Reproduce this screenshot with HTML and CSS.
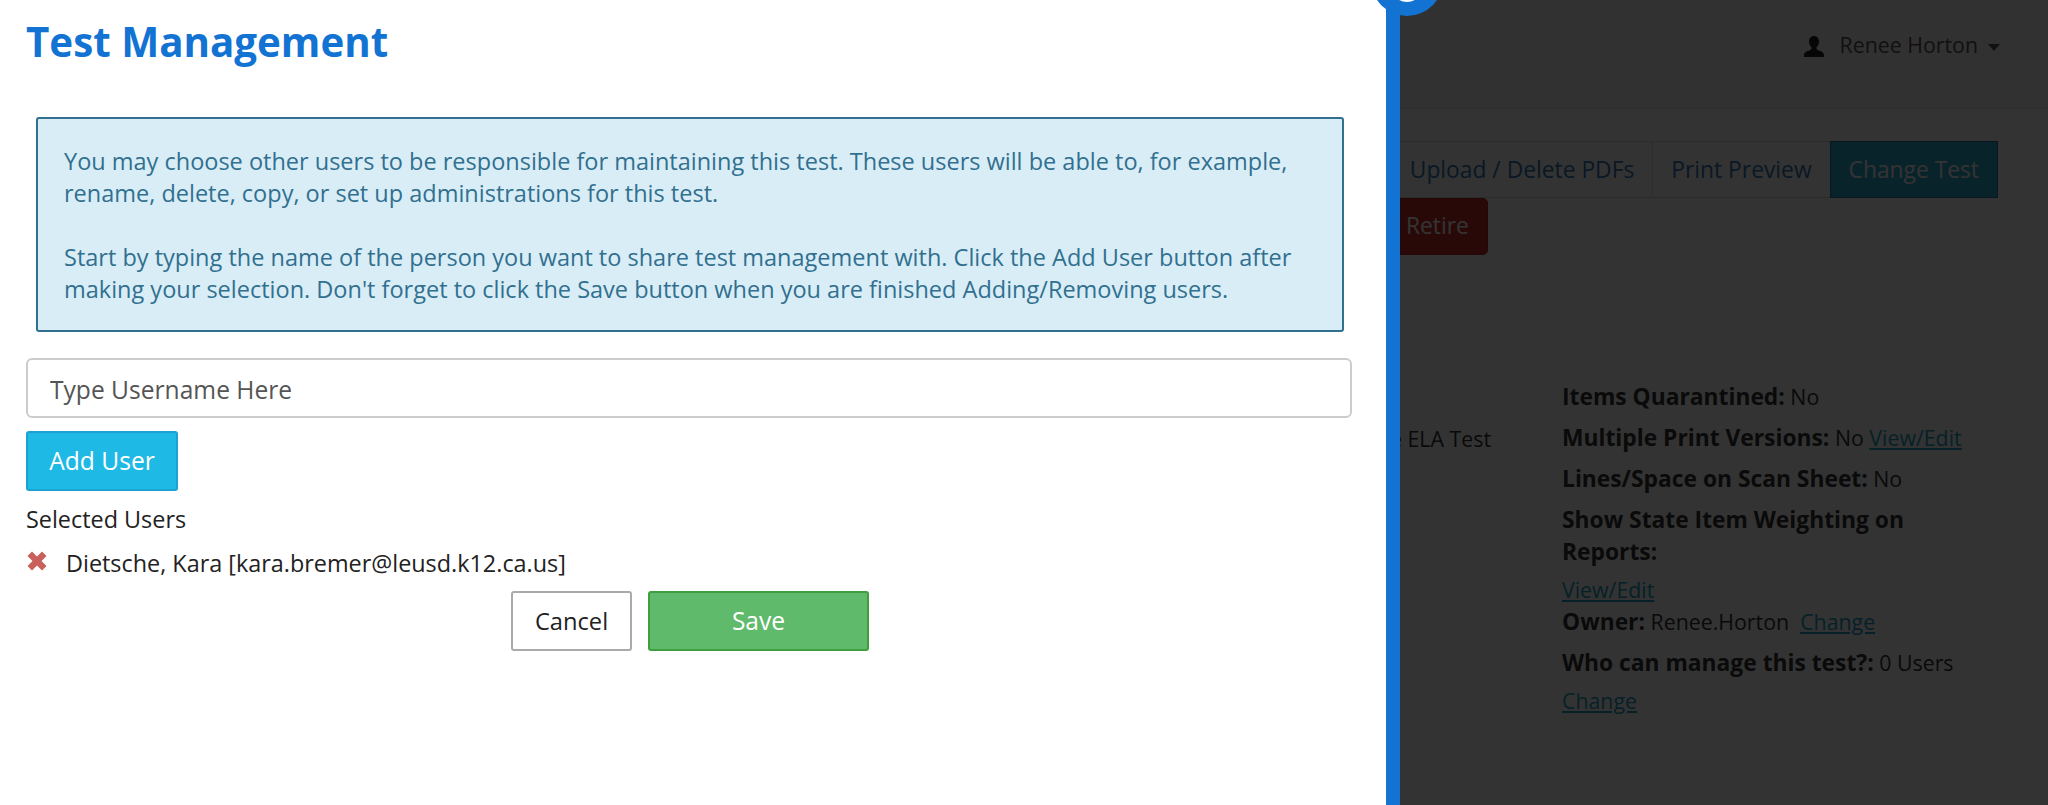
FILE: index.html
```html
<!DOCTYPE html>
<html lang="en">
<head>
<meta charset="utf-8">
<title>Test Management</title>
<link rel="stylesheet" href="styles.css">
</head>
<body>
<div class="page">
  <header class="topbar">
    <div class="user">
      <svg class="user-icon" viewBox="0 0 24 24"><path d="M12 1c-3.300 0-5 2.600-5 5.600 0 2.300.9 4.300 2.300 5.500.4 1 .2 2-.6 2.600C6.500 16 2 16.600 2 20v2h20v-2c0-3.400-4.500-4-6.700-5.300-.8-.6-1-1.600-.6-2.600C16.100 10.900 17 8.900 17 6.600 17 3.600 15.300 1 12 1z"/></svg>
      <span>Renee Horton</span>
      <i class="caret"></i>
    </div>
  </header>
  <div class="toolbar">
    <div class="tabs">
      <a class="tab tab-first">Upload / Delete PDFs</a>
      <a class="tab">Print Preview</a>
      <a class="tab tab-info">Change Test</a>
    </div>
    <div class="danger-row"><a class="btn-danger">Retire</a></div>
  </div>
  <div class="details">
    <div class="col-left">Grade ELA Test</div>
    <div class="col-right">
      <p class="row"><b>Items Quarantined:</b> No</p>
      <p class="row"><b>Multiple Print Versions:</b> No <a>View/Edit</a></p>
      <p class="row"><b>Lines/Space on Scan Sheet:</b> No</p>
      <p class="row row-tight row-narrow"><b>Show State Item Weighting on Reports:</b></p>
      <p class="row row-link"><a>View/Edit</a></p>
      <p class="row"><b>Owner:</b> Renee.Horton&nbsp; <a>Change</a></p>
      <p class="row row-tight"><b>Who can manage this test?:</b> 0 Users</p>
      <p class="row row-link"><a>Change</a></p>
    </div>
  </div>
</div>
<div class="overlay"></div>
<aside class="panel">
  <a class="close-tab"></a>
  <h1 class="title">Test Management</h1>
  <div class="alert">
    <p>You may choose other users to be responsible for maintaining this test. These users will be able to, for example, rename, delete, copy, or set up administrations for this test.</p>
    <p>Start by typing the name of the person you want to share test management with. Click the Add User button after making your selection. Don't forget to click the Save button when you are finished Adding/Removing users.</p>
  </div>
  <input class="field" type="text" placeholder="Type Username Here">
  <button class="btn btn-add" type="button">Add User</button>
  <div class="selected-label">Selected Users</div>
  <div class="selected-user">
    <svg class="remove" viewBox="0 0 20 20"><path d="M5 .5L10 5.500l5-5L19.500 5l-5 5 5 5-4.500 4.500-5-5-5 5L.5 15l5-5-5-5z"/></svg>
    <span>Dietsche, Kara [kara.bremer@leusd.k12.ca.us]</span>
  </div>
  <div class="actions">
    <button class="btn btn-cancel" type="button">Cancel</button>
    <button class="btn btn-save" type="button">Save</button>
  </div>
</aside>
</body>
</html>
```
FILE: styles.css
```css
* { box-sizing: border-box; }
html, body { margin: 0; height: 100%; overflow: hidden; }
body {
  position: relative;
  background: #fff;
  color: #333;
  font-family: "Open Sans", "Liberation Sans", sans-serif;
  font-size: 22.8px;
  line-height: 32px;
}
.page { height: 805px; }
.topbar {
  height: 109px;
  background: #f2f2f2;
  border-bottom: 1px solid #e7e7e7;
  display: flex;
  justify-content: flex-end;
  padding: 29px 48px 0 0;
  font-size: 21.33px;
}
.user { display: flex; align-items: flex-start; height: 32px; color: #555; }
.user span { margin-left: 14px; }
.user-icon { width: 24px; height: 24px; margin-top: 6px; fill: #222; }
.caret {
  margin: 15px 0 0 10px;
  border-top: 7px solid #555;
  border-left: 6.500px solid transparent;
  border-right: 6.500px solid transparent;
}
.toolbar {
  background: #fff;
  height: 200px;
  padding: 32px 50px 0 0;
  display: flex;
  flex-direction: column;
  align-items: flex-end;
}
.tabs { display: flex; }
.tab {
  height: 57px;
  padding: 12px 18px 0;
  border: 1px solid #ddd;
  margin-left: -1px;
  background: #fff;
}
.tab-first { border-left: 0; }
.tab-info { background: #31b0d5; border-color: #2a76a8; color: #fff; }
.danger-row { align-self: flex-start; margin: 0 0 0 1340px; }
.btn-danger {
  display: block;
  width: 148px;
  height: 57px;
  padding: 11px 0 0 65px;
  background: #c9302c;
  border: 1px solid #ac2925;
  border-radius: 5px;
  color: #fff;
}
.details { display: flex; padding-left: 1360px; background: #fff; height: 496px; font-size: 21.33px; }
.col-left { width: 202px; padding: 114px 71px 0 0; white-space: nowrap; direction: rtl; }
.col-right { width: 440px; padding-top: 72px; flex-shrink: 0; }
.row { margin: 0 0 9px; }
.row b { font-size: 22.8px; }
.row-tight { margin-bottom: 6px; }
.row-narrow { width: 400px; }
.row-link { margin-bottom: 0; }
a { color: #337ab7; }
.row a { text-decoration: underline; color: #23a2c4; }
.overlay {
  position: absolute;
  inset: 0;
  background: rgba(0, 0, 0, .8);
}
.panel {
  position: absolute;
  left: 0;
  top: 0;
  width: 1400px;
  height: 805px;
  background: #fff;
  border-right: 14px solid #1273d3;
  padding: 0 0 0 26px;
}
.close-tab {
  position: absolute;
  left: 1371px;
  top: -56px;
  width: 72px;
  height: 72px;
  border-radius: 50%;
  background: #1273d3;
}
.close-tab::after {
  content: "";
  position: absolute;
  left: 20px;
  top: 26px;
  width: 32px;
  height: 32px;
  border-radius: 50%;
  background: #fff;
}
.title {
  margin: 0;
  padding-top: 16px;
  height: 117px;
  color: #1273d3;
  font-size: 40.300px;
  line-height: 52px;
  font-weight: 700;
}
.alert {
  width: 1308px;
  height: 215px;
  margin-left: 10px;
  padding: 26px 26px 0;
  background: #d9edf7;
  border: 2px solid #31708f;
  border-radius: 3px;
  color: #31708f;
  font-size: 23.500px;
}
.alert p { margin: 0 0 32px; }
.field {
  display: block;
  width: 1326px;
  height: 60px;
  margin-top: 26px;
  padding: 2px 22px 0;
  border: 2px solid #ccc;
  border-radius: 6px;
  font: inherit;
  font-size: 24.600px;
  color: #555;
  outline: 0;
}
.field::placeholder { color: #555; opacity: 1; }
.btn {
  display: block;
  height: 60px;
  border-radius: 3px;
  font: inherit;
  font-size: 24.600px;
  padding: 0;
}
.btn-add {
  width: 152px;
  margin-top: 13px;
  color: #fff;
  background: #1fb9e6;
  border: 2px solid #1aa3d0;
}
.selected-label { margin-top: 12px; color: #222; font-size: 23.400px; }
.selected-user {
  display: flex;
  align-items: center;
  margin-top: 12px;
  height: 32px;
  color: #222;
  font-size: 23.400px;
}
.remove { width: 20px; height: 20px; fill: #c9605c; margin: -4px 19px 0 1px; }
.actions { display: flex; gap: 16px; margin: 12px 0 0 485px; }
.btn-cancel { width: 121px; background: #fff; border: 2px solid #aaa; color: #222; font-size: 23.700px; }
.btn-save { width: 221px; background: #5fba6c; border: 2px solid #3f9e3f; color: #fff; }
```
